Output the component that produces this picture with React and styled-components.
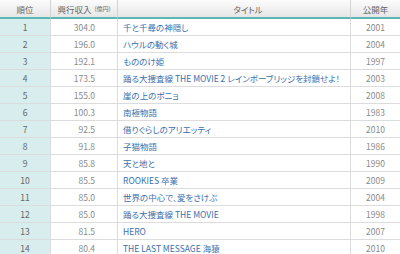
import React from "react";
import styled, { createGlobalStyle } from "styled-components";

const Global = createGlobalStyle`
  html, body { margin: 0; padding: 0; background: #fff; }
  body { font-family: "Noto Sans CJK JP", "Liberation Sans", sans-serif; }
`;

const Table = styled.div`
  display: grid;
  grid-template-columns: 51px 67px 233px 49px;
  width: 400px;
  font-size: 8.5px;
  font-feature-settings: "palt";
`;

const Head = styled.div`
  box-sizing: border-box;
  height: 19px;
  border-bottom: 2px solid #5bb6b6;
  border-right: ${(p) => (p.$last ? "none" : "1px solid #d2d2d2")};
  background: linear-gradient(#fcfcfc, #e6e6e6);
  color: #666;
  display: flex;
  align-items: center;
  justify-content: center;
  padding-left: ${(p) => p.$pl || 0}px;
  white-space: nowrap;
`;

const Small = styled.span`
  font-size: 6px;
  margin-left: 3px;
`;

const Cell = styled.div`
  box-sizing: border-box;
  height: 17px;
  border-bottom: 1px solid #dcdcdc;
  border-right: ${(p) => (p.$last ? "none" : "1px solid #dcdcdc")};
  background: ${(p) => (p.$rank ? "#d8eded" : "#fff")};
  color: ${(p) => (p.$link ? "#3a6fae" : p.$rank ? "#666" : "#8a8a8a")};
  display: flex;
  align-items: center;
  justify-content: ${(p) => p.$align || "center"};
  padding: ${(p) => p.$pad || "0"};
  white-space: nowrap;
  overflow: hidden;
`;

const rows = [
  ["1", "304.0", "千と千尋の神隠し", "2001"],
  ["2", "196.0", "ハウルの動く城", "2004"],
  ["3", "192.1", "もののけ姫", "1997"],
  ["4", "173.5", "踊る大捜査線 THE MOVIE 2 レインボーブリッジを封鎖せよ！", "2003"],
  ["5", "155.0", "崖の上のポニョ", "2008"],
  ["6", "100.3", "南極物語", "1983"],
  ["7", "92.5", "借りぐらしのアリエッティ", "2010"],
  ["8", "91.8", "子猫物語", "1986"],
  ["9", "85.8", "天と地と", "1990"],
  ["10", "85.5", "ROOKIES 卒業", "2009"],
  ["11", "85.0", "世界の中心で、愛をさけぶ", "2004"],
  ["12", "85.0", "踊る大捜査線 THE MOVIE", "1998"],
  ["13", "81.5", "HERO", "2007"],
  ["14", "80.4", "THE LAST MESSAGE 海猿", "2010"],
];

export default function App() {
  return (
    <>
      <Global />
      <Table>
        <Head>順位</Head>
        <Head>
          興行収入<Small>(億円)</Small>
        </Head>
        <Head $pl={28}>タイトル</Head>
        <Head $last>公開年</Head>
        {rows.map(([r, v, t, y]) => (
          <React.Fragment key={r}>
            <Cell $rank>{r}</Cell>
            <Cell $align="flex-end" $pad="0 22px 0 0">{v}</Cell>
            <Cell $link $align="flex-start" $pad="0 0 0 5px">{t}</Cell>
            <Cell $last>{y}</Cell>
          </React.Fragment>
        ))}
      </Table>
    </>
  );
}
